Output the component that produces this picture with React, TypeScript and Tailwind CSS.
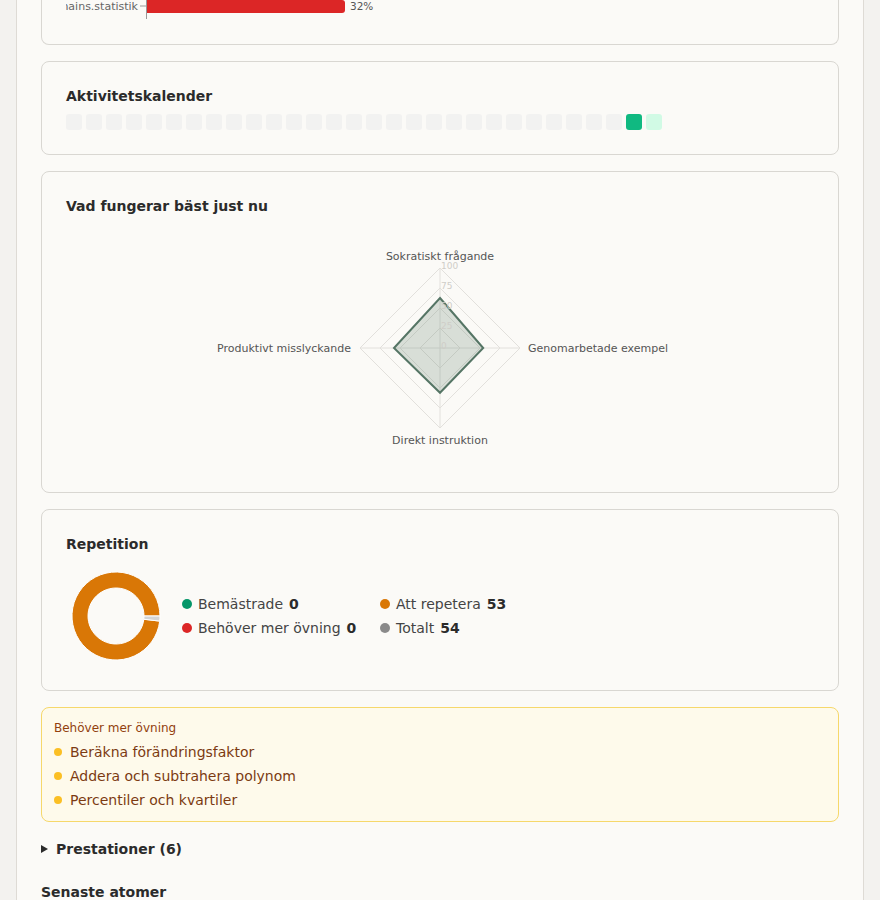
import React from 'react';

const font = { fontFamily: '"DejaVu Sans", "Noto Sans", sans-serif' };

function Card({ title, children, className = '' }: { title?: string; children: React.ReactNode; className?: string }) {
  return (
    <div className={`rounded-lg border border-[#d9d7d2] bg-[#fbfaf7] p-6 ${className}`}>
      {title && <h2 className="text-[14px] font-bold leading-5 text-[#2b2b2b]">{title}</h2>}
      {children}
    </div>
  );
}

function TopBarChart() {
  // only the last row of the chart is visible
  return (
    <div className="h-[45px] rounded-b-lg border-x border-b border-[#d9d7d2] bg-[#fbfaf7] px-6">
      <svg width="748" height="22" className="block">
        <text x="72" y="10" textAnchor="end" fontSize="11" fill="#666">domains.statistik</text>
        <line x1="74" y1="6" x2="80" y2="6" stroke="#999" strokeWidth="1" />
        <line x1="80.5" y1="0" x2="80.5" y2="19" stroke="#999" strokeWidth="1" />
        <path d="M81 0 H276 Q279 0 279 3 V10 Q279 13 276 13 H81 Z" fill="#dc2626" />
        <text x="284" y="10" fontSize="10.5" fill="#555">32%</text>
      </svg>
    </div>
  );
}

function ActivityCalendar() {
  const days = Array.from({ length: 30 }, (_, i) => i);
  return (
    <Card title="Aktivitetskalender">
      <div className="mt-2 flex gap-1">
        {days.map((d) => (
          <div
            key={d}
            className={
              d === 28
                ? 'h-4 w-4 rounded-[3px] bg-[#10b981]'
                : d === 29
                ? 'h-4 w-4 rounded-[3px] bg-[#d1fae5]'
                : 'h-4 w-4 rounded-[3px] bg-[#f2f2f1]'
            }
          />
        ))}
      </div>
    </Card>
  );
}

function RadarChart() {
  const cx = 374;
  const cy = 120;
  const R = 80;
  const diamond = (r: number) => `${cx},${cy - r} ${cx + r},${cy} ${cx},${cy + r} ${cx - r},${cy}`;
  const vals = [62.5, 54, 56, 57.5];
  const pts = [
    `${cx},${cy - (vals[0] / 100) * R}`,
    `${cx + (vals[1] / 100) * R},${cy}`,
    `${cx},${cy + (vals[2] / 100) * R}`,
    `${cx - (vals[3] / 100) * R},${cy}`,
  ].join(' ');
  return (
    <Card title="Vad fungerar bäst just nu">
      <svg width="748" height="240" className="mt-3 block">
        {[20, 40, 60, 80].map((r) => (
          <polygon key={r} points={diamond(r)} fill="none" stroke="#e2e0dc" strokeWidth="1" />
        ))}
        <line x1={cx} y1={cy - R} x2={cx} y2={cy + R} stroke="#e2e0dc" />
        <line x1={cx - R} y1={cy} x2={cx + R} y2={cy} stroke="#e2e0dc" />
        <polygon points={pts} fill="#5a7a6a" fillOpacity="0.22" stroke="#557565" strokeWidth="2" />
        {[0, 25, 50, 75, 100].map((v) => (
          <text key={v} x={cx + 1} y={cy - (v / 100) * R + 1} fontSize="9" fill="#cfcdc8">
            {v}
          </text>
        ))}
        <text x={cx} y={cy - 88} textAnchor="middle" fontSize="11" fill="#555">Sokratiskt frågande</text>
        <text x={cx + 88} y={cy + 4} textAnchor="start" fontSize="11" fill="#555">Genomarbetade exempel</text>
        <text x={cx} y={cy + 96} textAnchor="middle" fontSize="11" fill="#555">Direkt instruktion</text>
        <text x={cx - 89} y={cy + 4} textAnchor="end" fontSize="11" fill="#555">Produktivt misslyckande</text>
      </svg>
    </Card>
  );
}

function Donut() {
  const c = 50;
  const ro = 44;
  const ri = 28;
  const a = (1 / 54) * Math.PI * 2;
  const ox = c + ro * Math.cos(a);
  const oy = c + ro * Math.sin(a);
  const ix = c + ri * Math.cos(a);
  const iy = c + ri * Math.sin(a);
  const gray = `M${c + ro} ${c} A${ro} ${ro} 0 0 1 ${ox} ${oy} L${ix} ${iy} A${ri} ${ri} 0 0 0 ${c + ri} ${c} Z`;
  const orange = `M${ox} ${oy} A${ro} ${ro} 0 1 1 ${c + ro} ${c} L${c + ri} ${c} A${ri} ${ri} 0 1 0 ${ix} ${iy} Z`;
  return (
    <svg width="100" height="100" className="block shrink-0">
      <path d={orange} fill="#d97706" stroke="#fff" strokeWidth="1" />
      <path d={gray} fill="#d4d4d4" stroke="#fff" strokeWidth="1" />
    </svg>
  );
}

function LegendItem({ color, label, value }: { color: string; label: string; value: number }) {
  return (
    <div className="flex h-6 items-center gap-1.5 text-[14px] text-[#444]">
      <span className={`h-2.5 w-2.5 rounded-full ${color}`} />
      <span>{label}</span>
      <span className="font-bold text-[#2b2b2b]">{value}</span>
    </div>
  );
}

function Repetition() {
  return (
    <Card title="Repetition">
      <div className="mt-3 flex items-center gap-4">
        <Donut />
        <div className="flex">
          <div className="w-[198px]">
            <LegendItem color="bg-[#059669]" label="Bemästrade" value={0} />
            <LegendItem color="bg-[#dc2626]" label="Behöver mer övning" value={0} />
          </div>
          <div>
            <LegendItem color="bg-[#d97706]" label="Att repetera" value={53} />
            <LegendItem color="bg-[#8a8a8a]" label="Totalt" value={54} />
          </div>
        </div>
      </div>
    </Card>
  );
}

function NeedsPractice() {
  const items = ['Beräkna förändringsfaktor', 'Addera och subtrahera polynom', 'Percentiler och kvartiler'];
  return (
    <div className="rounded-lg border border-[#f6d86b] bg-[#fefaeb] px-3 pt-3 pb-[9px]">
      <div className="text-[12px] leading-4 text-[#92400e]">Behöver mer övning</div>
      <ul className="mt-1">
        {items.map((it) => (
          <li key={it} className="flex h-6 items-center gap-2 text-[14px] text-[#7c3a12]">
            <span className="h-2 w-2 rounded-full bg-[#fbbf24]" />
            {it}
          </li>
        ))}
      </ul>
    </div>
  );
}

export default function App() {
  return (
    <div className="min-h-screen bg-[#f3f2ef]" style={font}>
      <div className="mx-4 min-h-[900px] border-x border-[#dedbd5] bg-[#fbfaf7] px-6">
        <TopBarChart />
        <div className="mt-4 space-y-4">
          <ActivityCalendar />
          <RadarChart />
          <Repetition />
          <NeedsPractice />
        </div>
        <div className="mt-[15px] flex h-6 items-center gap-2 text-[14px] font-bold text-[#2b2b2b]">
          <svg width="7" height="8" className="block shrink-0">
            <polygon points="0,0 7,4 0,8" fill="#2b2b2b" />
          </svg>
          Prestationer (6)
        </div>
        <h3 className="mt-[19px] text-[14px] font-bold leading-6 text-[#2b2b2b]">Senaste atomer</h3>
      </div>
    </div>
  );
}
